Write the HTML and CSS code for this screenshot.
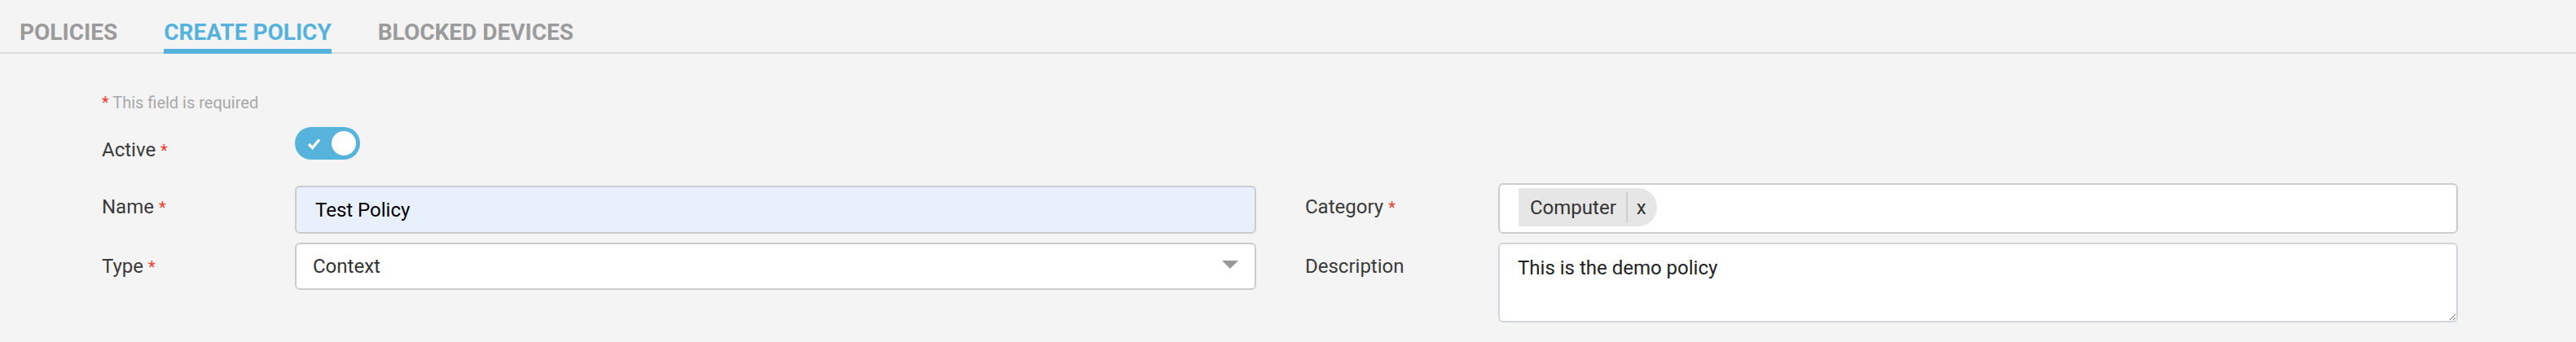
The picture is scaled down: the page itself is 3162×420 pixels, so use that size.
FILE: index.html
```html
<!DOCTYPE html>
<html lang="en">
<head>
<meta charset="utf-8">
<title>Create Policy</title>
<link rel="stylesheet" href="styles.css">
</head>
<body>
<nav class="tabs">
  <a class="tab">POLICIES</a>
  <a class="tab tab-active">CREATE POLICY</a>
  <a class="tab">BLOCKED DEVICES</a>
</nav>
<form class="policy-form">
  <p class="note"><span class="note-req">*</span> This field is required</p>

  <label class="lbl lbl-left">Active<span class="req">*</span></label>
  <div class="toggle">
    <svg class="toggle-check" width="17" height="15" viewBox="0 0 17 15"><polyline points="2,8 6.5,12.5 15,2.5" fill="none" stroke="#fff" stroke-width="3.4" stroke-linejoin="miter"/></svg>
    <span class="toggle-knob"></span>
  </div>

  <label class="lbl lbl-left">Name<span class="req">*</span></label>
  <input class="field field-name" type="text" value="Test Policy">
  <label class="lbl lbl-right">Category<span class="req">*</span></label>
  <div class="field chips">
    <span class="chip"><span class="chip-label">Computer</span><span class="chip-sep"></span><span class="chip-x">x</span></span>
  </div>

  <label class="lbl lbl-left">Type<span class="req">*</span></label>
  <div class="field select"><span>Context</span><span class="caret"></span></div>
  <label class="lbl lbl-right">Description</label>
  <textarea class="field textarea">This is the demo policy</textarea>
</form>
</body>
</html>
```
FILE: styles.css
```css
html, body {
  margin: 0;
  padding: 0;
  background: #f4f4f4;
  font-family: Roboto, "Liberation Sans", Arial, sans-serif;
}

.tabs {
  display: flex;
  gap: 57px;
  padding-left: 24px;
  border-bottom: 2px solid #dddddd;
}

.tab {
  display: block;
  margin-bottom: -2px;
  padding: 23px 0 4px;
  font-size: 28px;
  font-weight: 700;
  line-height: 33px;
  color: #9b9b9b;
  border-bottom: 6px solid transparent;
}

.tab-active {
  color: #55b2dc;
  border-bottom-color: #55b2dc;
}

.policy-form {
  display: grid;
  grid-template-columns: 237px 1180px 297px 1178px;
  row-gap: 11px;
  align-items: start;
  padding: 48px 0 0 125px;
}

.note {
  grid-column: 1 / -1;
  margin: 0 0 6px;
  font-size: 20px;
  line-height: 24px;
  color: #a8a8a8;
}

.note-req {
  color: #f5382c;
}

.lbl {
  font-size: 24px;
  line-height: 58px;
  color: #3a3a3a;
}

.lbl-left {
  grid-column: 1;
}

.lbl-right {
  padding-left: 60px;
}

.req {
  margin-left: 6px;
  font-size: 20px;
  color: #f5382c;
}

.toggle {
  display: flex;
  align-items: center;
  justify-content: space-between;
  box-sizing: border-box;
  width: 80px;
  height: 40px;
  margin-top: 1px;
  padding: 0 5px 0 15px;
  border-radius: 20px;
  background: #56b3dc;
}

.toggle-check {
  display: block;
}

.toggle-knob {
  width: 30px;
  height: 30px;
  border-radius: 50%;
  background: #ffffff;
}

.field {
  box-sizing: border-box;
  width: 100%;
  margin: 0;
  border: 2px solid #cccccc;
  border-radius: 6px;
  background: #ffffff;
  font-family: Roboto, "Liberation Sans", Arial, sans-serif;
  font-size: 24px;
  outline: none;
}

.field-name {
  align-self: end;
  height: 59px;
  padding: 0 23px;
  background: #e8f0fe;
  color: #000000;
}

.chips {
  display: flex;
  align-items: center;
  padding: 4px 23px 7px;
}

.chip {
  display: inline-flex;
  align-items: center;
  height: 47px;
  border-radius: 2px 24px 24px 2px;
  background: #e6e6e6;
  color: #333333;
  font-size: 24px;
}

.chip-label {
  padding: 0 12px 0 14px;
}

.chip-sep {
  width: 2px;
  height: 39px;
  background: #d0d0d0;
}

.chip-x {
  padding: 0 13px 0 11px;
}

.select {
  display: flex;
  align-items: center;
  justify-content: space-between;
  height: 58px;
  padding: 0 20px;
  color: #333333;
}

.caret {
  width: 0;
  height: 0;
  margin-bottom: 4px;
  border-left: 10px solid transparent;
  border-right: 10px solid transparent;
  border-top: 10px solid #999999;
}

.textarea {
  display: block;
  height: 98px;
  padding: 12px 22px;
  line-height: 34px;
  color: #222222;
  border-color: #d2d6db;
}
```
